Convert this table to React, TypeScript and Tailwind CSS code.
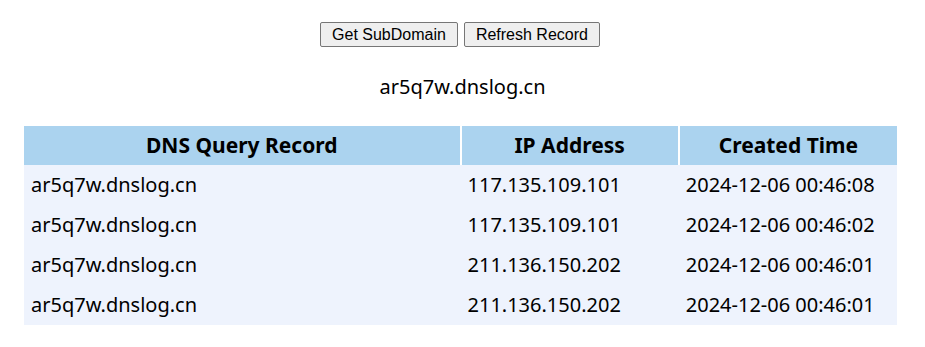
import React from "react"

interface DnsRecord {
  domain: string
  ip: string
  created: string
}

const records: DnsRecord[] = [
  { domain: "ar5q7w.dnslog.cn", ip: "117.135.109.101", created: "2024-12-06 00:46:08" },
  { domain: "ar5q7w.dnslog.cn", ip: "117.135.109.101", created: "2024-12-06 00:46:02" },
  { domain: "ar5q7w.dnslog.cn", ip: "211.136.150.202", created: "2024-12-06 00:46:01" },
  { domain: "ar5q7w.dnslog.cn", ip: "211.136.150.202", created: "2024-12-06 00:46:01" },
]

const App: React.FC = () => {
  return (
    <div className="w-[925px] h-[347px] bg-white font-['Noto_Sans',sans-serif] text-black">
      <div className="flex justify-center gap-[6px] pt-[22px] pr-[5px]">
        <button className="h-[25px] px-[11px] border border-[#767676] rounded-[2px] bg-[#efefef] text-[16px] font-['Liberation_Sans',sans-serif]">
          Get SubDomain
        </button>
        <button className="h-[25px] px-[11px] border border-[#767676] rounded-[2px] bg-[#efefef] text-[16px] font-['Liberation_Sans',sans-serif]">
          Refresh Record
        </button>
      </div>
      <div className="mt-[27px] text-center text-[20px] leading-[26px]">ar5q7w.dnslog.cn</div>
      <table className="ml-[24px] mt-[26px] w-[873px] border-collapse text-[20px]">
        <thead>
          <tr className="bg-[#abd3ef]">
            <th className="w-1/2 h-[39px] font-bold text-center border-r-2 border-white text-[21px]">DNS Query Record</th>
            <th className="w-1/4 h-[39px] font-bold text-center border-r-2 border-white text-[21px]">IP Address</th>
            <th className="w-1/4 h-[39px] font-bold text-center text-[21px]">Created Time</th>
          </tr>
        </thead>
        <tbody>
          {records.map((r, i) => (
            <tr key={i} className="bg-[#eef3fd]">
              <td className="h-[40px] px-[7px]">{r.domain}</td>
              <td className="h-[40px] px-[7px]">{r.ip}</td>
              <td className="h-[40px] px-[7px]">{r.created}</td>
            </tr>
          ))}
        </tbody>
      </table>
    </div>
  )
}

export default App
